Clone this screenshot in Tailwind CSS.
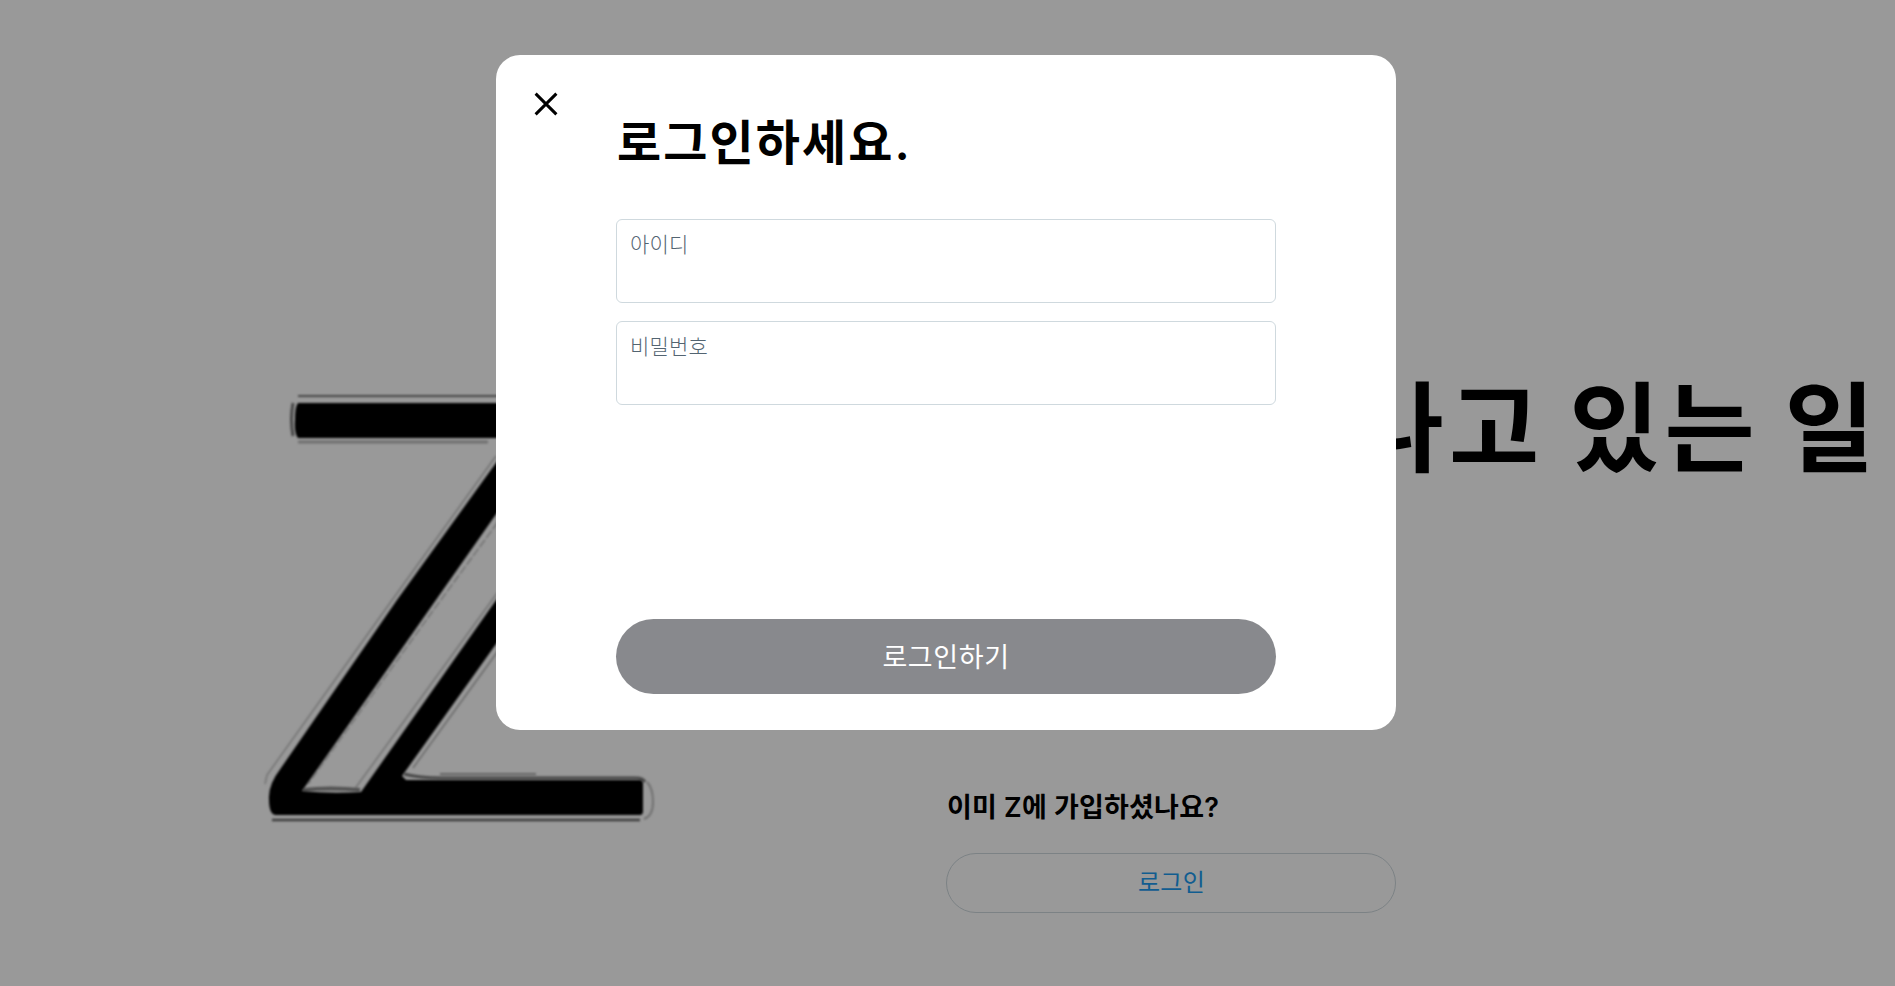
<!DOCTYPE html>
<html lang="ko">
<head>
    <meta charset="UTF-8">
    <meta name="viewport" content="width=device-width, initial-scale=1.0">
    <title>Z</title>
    <script src="https://cdn.jsdelivr.net/npm/@tailwindcss/browser@4"></script>
</head>
<body class="relative h-screen overflow-hidden bg-white text-black font-['Inter','Noto_Sans_CJK_KR',sans-serif]">
    <!-- Landing page -->
    <main class="flex h-full">
        <div class="w-[946px] shrink-0 pl-[256px] pt-[386px]">
            <svg class="h-[450px] w-[420px]" viewBox="256 386 420 450" fill="none">
                <defs>
                    <filter id="soft" x="-5%" y="-5%" width="110%" height="110%">
                        <feGaussianBlur stdDeviation="0.8"/>
                    </filter>
                </defs>
                <g stroke="#aaa" stroke-width="1.4" filter="url(#soft)">
                    <path d="M298 396H510" stroke="#777" stroke-width="2"/>
                    <path d="M298 442H488" stroke="#bbb" stroke-width="3"/>
                    <path d="M293 403Q290 419 293 436" stroke="#777" stroke-width="3"/>
                    <path d="M496 456L385 610L267 775L265 784" stroke="#bbb"/>
                    <path d="M498 522L432 612L308 784" stroke="#bbb" stroke-dasharray="9 2"/>
                    <path d="M498 592L354 790" stroke="#bbb"/>
                    <path d="M498 651L413 768"/>
                    <path d="M303 790Q330 787 360 790" stroke="#888" stroke-width="4"/>
                    <path d="M404 774Q420 778 440 778H636Q643 778 645 782" stroke="#777" stroke-width="3"/>
                    <path d="M440 774H536" stroke="#888"/>
                    <path d="M647 782Q653 788 653 802Q653 816 644 819" stroke="#bbb" stroke-width="2"/>
                    <path d="M272 820H640" stroke="#666" stroke-width="2.4"/>
                </g>
                <g fill="#060606" filter="url(#soft)">
                    <path d="M298 403H520V438H298Q294 433 295 420Q295 406 298 403Z"/>
                    <path d="M506 449L397 600L281 768Q268 785 269 799Q269 815 276 815H640Q643 815 643 811V784Q643 780 640 780H406L402 776L506 630V586L361 792Q330 794 302 791L506 500Z"/>
                </g>
            </svg>
        </div>
        <div class="w-[949px] shrink-0 pt-[371px]">
            <h1 class="h-[419px] whitespace-nowrap pl-0.5 text-[98px] leading-[116px] font-semibold tracking-[5.1px] [word-spacing:-5px]">지금 일어나고 있는 일</h1>
            <h2 class="whitespace-nowrap pl-px text-[27px] leading-9 font-semibold tracking-[0.2px]">이미 Z에 가입하셨나요?</h2>
            <button class="mt-[27px] flex h-[60px] w-[450px] items-center justify-center rounded-full border border-[#cfd9de] pl-px text-2xl tracking-[0.3px] text-[#1d9bf0]">로그인</button>
        </div>
    </main>

    <!-- Login modal -->
    <div class="absolute inset-0 flex items-start bg-black/40 pl-[496px] pt-[55px]">
        <div class="relative flex h-[675px] w-[900px] flex-col rounded-3xl bg-white px-[120px] pb-9 pt-[53px]">
            <button class="absolute left-[35px] top-[34px]" aria-label="닫기">
                <svg class="size-[30px]" viewBox="0 0 30 30" fill="none" stroke="#000" stroke-width="3">
                    <path d="M4.6 4.6L25.4 25.4M25.4 4.6L4.6 25.4"/>
                </svg>
            </button>
            <h2 class="whitespace-nowrap pl-px text-5xl leading-[70px] font-semibold tracking-[2.1px]">로그인하세요.</h2>
            <form class="mt-[41px] flex grow flex-col gap-[18px]">
                <label class="h-[84px] rounded-md border border-[#cfd9de] px-[13px] pt-[11px] text-[21px] leading-7 font-light tracking-[0.2px] text-[#536471]">아이디</label>
                <label class="h-[84px] rounded-md border border-[#cfd9de] px-[13px] pt-[11px] text-[21px] leading-7 font-light tracking-[0.2px] text-[#536471]">비밀번호</label>
                <button type="button" class="mt-auto h-[75px] rounded-full bg-[#88898d] pt-1 text-[27px] tracking-[0.6px] text-white">로그인하기</button>
            </form>
        </div>
    </div>
</body>
</html>
